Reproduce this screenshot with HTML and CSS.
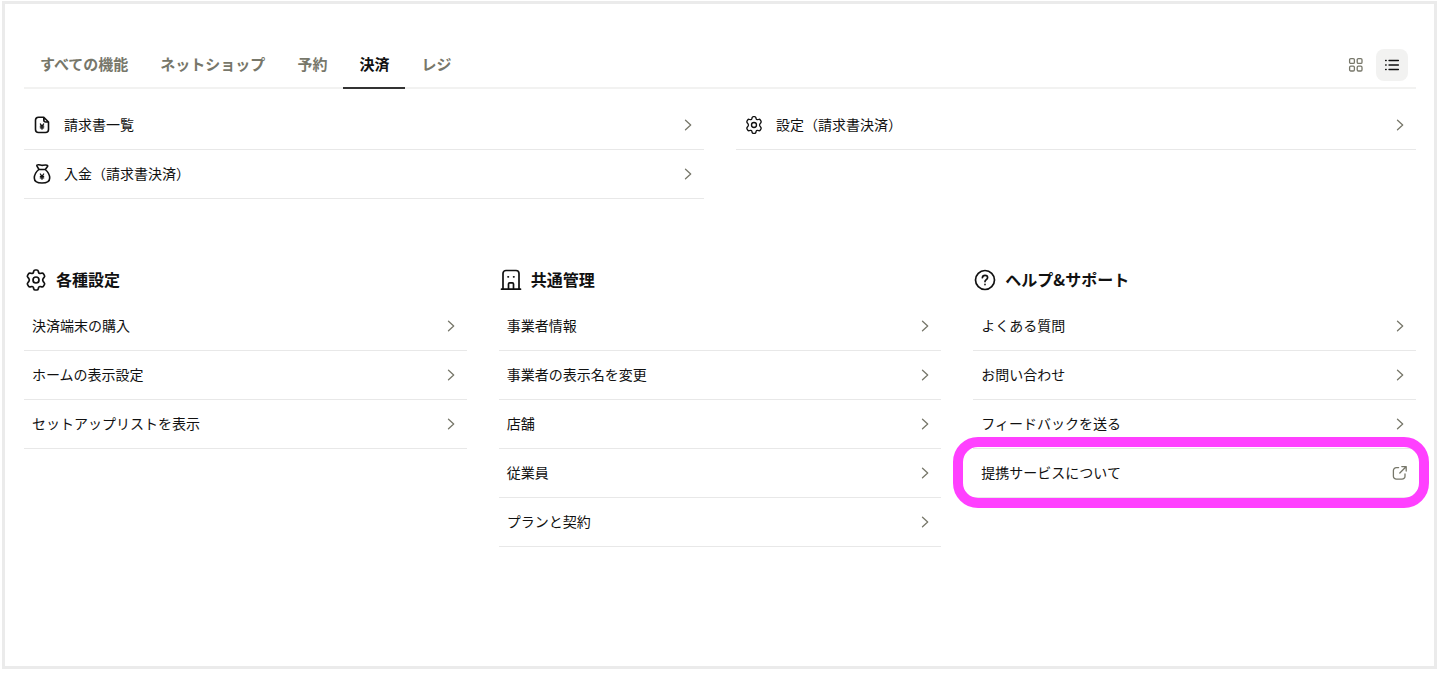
FILE: index.html
```html
<!DOCTYPE html>
<html lang="ja">
	<head>
		<meta charset="utf-8" />
		<meta name="viewport" content="width=device-width, initial-scale=1">
		<title>決済</title>
		<link rel="stylesheet" href="styles.css">
	</head>
	<body>
		<!-- 共通アイコン -->
		<svg class="sprite" width="0" height="0" aria-hidden="true">
			<symbol id="chevron" viewBox="0 0 16 16"><path d="M5.5 3.2 10.7 8l-5.2 4.8"/></symbol>
			<symbol id="gear" viewBox="0 0 24 24">
				<circle cx="12" cy="12" r="3"/>
				<path d="M9.7 3.3Q10 2 11.2 2h1.6q1.2 0 1.5 1.3l.3 1.3q.3 1 1.4.9l1.7-.3q1.2-.3 1.8.7l.9 1.5q.6 1-.2 1.9l-1.1 1.3q-.9 1.4 0 2.8l1.1 1.3q.8.9.2 1.9l-.9 1.5q-.6 1-1.8.7l-1.7-.3q-1.1-.1-1.4.9l-.3 1.3q-.3 1.3-1.5 1.3h-1.6q-1.2 0-1.5-1.3l-.3-1.3q-.3-1-1.4-.9l-1.7.3q-1.2.3-1.8-.7l-.9-1.5q-.6-1 .2-1.9l1.1-1.3q.9-1.4 0-2.8L3.8 9.3q-.8-.9-.2-1.9l.9-1.5q.6-1 1.8-.7l1.7.3q1.1.1 1.4-.9z"/>
			</symbol>
		</svg>

		<main class="panel">
			<div class="head">
				<nav class="tabs">
					<button class="tab" type="button">すべての機能</button>
					<button class="tab" type="button">ネットショップ</button>
					<button class="tab" type="button">予約</button>
					<button class="tab active" type="button" aria-current="true">決済</button>
					<button class="tab" type="button">レジ</button>
				</nav>
				<div class="views">
					<button class="view" type="button" aria-label="グリッド表示">
						<svg width="16" height="16" viewBox="0 0 16 16"><rect x="1.6" y="1.6" width="4.8" height="4.8" rx="1.2"/><rect x="9.2" y="1.6" width="4.8" height="4.8" rx="1.2"/><rect x="1.6" y="9.2" width="4.8" height="4.8" rx="1.2"/><rect x="9.2" y="9.2" width="4.8" height="4.8" rx="1.2"/></svg>
					</button>
					<button class="view on" type="button" aria-label="リスト表示">
						<svg width="16" height="16" viewBox="0 0 16 16"><path d="M5 3.5h9.4M5 8h9.4M5 12.5h9.4M1.6 3.5h.6M1.6 8h.6M1.6 12.5h.6"/></svg>
					</button>
				</div>
			</div>

			<div class="features">
				<ul class="list">
					<li><a class="row" href="#">
						<svg class="icon" viewBox="0 0 20 20"><path d="M11.8 2.3H6.5a3 3 0 0 0-3 3v9.2a3 3 0 0 0 3 3h7a3 3 0 0 0 3-3V7zM11.8 2.5V5a2 2 0 0 0 2 2h2.5"/><path class="yen" d="m8.3 8.9 1.7 2.2 1.7-2.2M10 11v3.2M8.3 11.2h3.4M8.3 12.8h3.4"/></svg>
						<span class="text">請求書一覧</span><svg class="arrow"><use href="#chevron"/></svg></a></li>
					<li><a class="row" href="#">
						<svg class="icon" viewBox="0 0 20 20"><path d="M7 5.5 5 2.2Q4.4.9 6 .8c2-.2 3 .9 5 .5 1.5-.3 2.6-.5 4-.1.9.3.8.9.3 1.6L13.3 5.5M6.8 5.5h6.4M6.8 5.5C4 7.9 2.3 11 2.3 14c0 3.4 2.4 5 7.7 5s7.7-1.6 7.7-5c0-3-1.7-6.1-4.5-8.5"/><path class="yen" d="m8.3 10 1.7 2.2 1.7-2.2M10 12.1v3.2M8.3 12.3h3.4M8.3 13.9h3.4"/></svg>
						<span class="text">入金（請求書決済）</span><svg class="arrow"><use href="#chevron"/></svg></a></li>
				</ul>
				<ul class="list">
					<li><a class="row" href="#">
						<svg class="icon"><use href="#gear"/></svg>
						<span class="text">設定（請求書決済）</span><svg class="arrow"><use href="#chevron"/></svg></a></li>
				</ul>
			</div>

			<div class="groups">
				<section>
					<h2 class="title"><svg class="mark"><use href="#gear"/></svg><span class="text">各種設定</span></h2>
					<ul class="list">
						<li><a class="row" href="#"><span class="text">決済端末の購入</span><svg class="arrow"><use href="#chevron"/></svg></a></li>
						<li><a class="row" href="#"><span class="text">ホームの表示設定</span><svg class="arrow"><use href="#chevron"/></svg></a></li>
						<li><a class="row" href="#"><span class="text">セットアップリストを表示</span><svg class="arrow"><use href="#chevron"/></svg></a></li>
					</ul>
				</section>
				<section>
					<h2 class="title"><svg class="mark" viewBox="0 0 24 24"><path d="M2.5 21.2h19M4 21V5.5a3 3 0 0 1 3-3h10a3 3 0 0 1 3 3V21M9.5 21v-5a1.2 1.2 0 0 1 1.2-1.2h2.6a1.2 1.2 0 0 1 1.2 1.2v5M9 8.8h.4M14.6 8.8h.4"/></svg><span class="text">共通管理</span></h2>
					<ul class="list">
						<li><a class="row" href="#"><span class="text">事業者情報</span><svg class="arrow"><use href="#chevron"/></svg></a></li>
						<li><a class="row" href="#"><span class="text">事業者の表示名を変更</span><svg class="arrow"><use href="#chevron"/></svg></a></li>
						<li><a class="row" href="#"><span class="text">店舗</span><svg class="arrow"><use href="#chevron"/></svg></a></li>
						<li><a class="row" href="#"><span class="text">従業員</span><svg class="arrow"><use href="#chevron"/></svg></a></li>
						<li><a class="row" href="#"><span class="text">プランと契約</span><svg class="arrow"><use href="#chevron"/></svg></a></li>
					</ul>
				</section>
				<section>
					<h2 class="title"><svg class="mark" viewBox="0 0 24 24"><circle cx="12" cy="12" r="9.5"/><path d="M9.4 9.7c.1-1.6 1.1-2.4 2.6-2.4s2.6.9 2.6 2.2c0 2-2.6 2.1-2.6 4.1M12 16.4v.2"/></svg><span class="text">ヘルプ&amp;サポート</span></h2>
					<ul class="list">
						<li><a class="row" href="#"><span class="text">よくある質問</span><svg class="arrow"><use href="#chevron"/></svg></a></li>
						<li><a class="row" href="#"><span class="text">お問い合わせ</span><svg class="arrow"><use href="#chevron"/></svg></a></li>
						<li><a class="row" href="#"><span class="text">フィードバックを送る</span><svg class="arrow"><use href="#chevron"/></svg></a></li>
						<li><a class="row marked" href="#"><span class="text">提携サービスについて</span><svg class="arrow" viewBox="0 0 16 16"><path d="M6.6 2.6H4.4a3 3 0 0 0-3 3v5.6a3 3 0 0 0 3 3H10a3 3 0 0 0 3-3V9M9.8 1.6h4.4V6M14 1.8 7.8 8"/></svg></a></li>
					</ul>
				</section>
			</div>
		</main>
	</body>
</html>
```

FILE: styles.css
```css
*{
	box-sizing: border-box;
}
body{
	margin: 1px 3px 4px 2px;
	background-color: #fff;
	color: #111;
	font-family: "Noto Sans CJK JP", "Noto Sans", sans-serif;
	font-size: 14px;
	line-height: 24px;
}
svg{
	display: block;
	fill: none;
	stroke: currentColor;
	stroke-linecap: round;
	stroke-linejoin: round;
}
.sprite{
	position: absolute;
}
button{
	border: 0;
	padding: 0;
	background: none;
	font-family: inherit;
	cursor: pointer;
}
.panel{
	min-height: calc(100vh - 5px);
	border: 3px solid #ebebeb;
	padding: 36px 18px 36px 19px;
}

/* タブ */
.head{
	display: flex;
	justify-content: space-between;
	border-bottom: 2px solid #f2f2f1;
}
.tabs{
	display: flex;
	margin-bottom: -2px;
}
.tab{
	height: 49px;
	padding: 0 16px;
	border-bottom: 2px solid transparent;
	color: #77776a;
	font-size: 15px;
	font-weight: bold;
	line-height: 24px;
}
.tab.active{
	border-bottom-color: #333;
	color: #111;
}
.views{
	display: flex;
	align-items: center;
	gap: 4px;
	padding: 2px 8px 0 0;
}
.view{
	display: grid;
	place-items: center;
	width: 32px;
	height: 32px;
	border-radius: 8px;
	color: #77776a;
	stroke-width: 1.3;
}
.view.on{
	background-color: #f2f2f1;
	color: #111;
}

/* リスト */
.list{
	margin: 0;
	padding: 0;
	list-style: none;
}
.row{
	display: flex;
	align-items: center;
	gap: 12px;
	padding: 12px 8px;
	border-bottom: 1px solid #e8e8e8;
	color: inherit;
	text-decoration: none;
}
.text{
	padding-bottom: 2px;
	line-height: 22px;
}
.icon{
	width: 20px;
	height: 20px;
	stroke-width: 1.6;
}
.yen{
	stroke-width: 1.2;
}
.arrow{
	width: 16px;
	height: 16px;
	margin-left: auto;
	color: #77776a;
	stroke-width: 1.3;
}
.features{
	display: grid;
	grid-template-columns: 1fr 1fr;
	gap: 32px;
	padding-top: 12px;
}
.groups{
	display: grid;
	grid-template-columns: repeat(3, 1fr);
	gap: 32px;
	margin-top: 69px;
}
.title{
	display: flex;
	align-items: center;
	gap: 8px;
	margin: 0 0 10px;
	font-size: 16px;
	line-height: 24px;
}
.mark{
	width: 24px;
	height: 24px;
	stroke-width: 1.7;
}

/* 強調枠 */
.marked{
	position: relative;
}
.marked::after{
	content: "";
	position: absolute;
	inset: -12px -13px -11px -20px;
	border: 10px solid #ff40ff;
	border-radius: 25px;
	pointer-events: none;
}
```
